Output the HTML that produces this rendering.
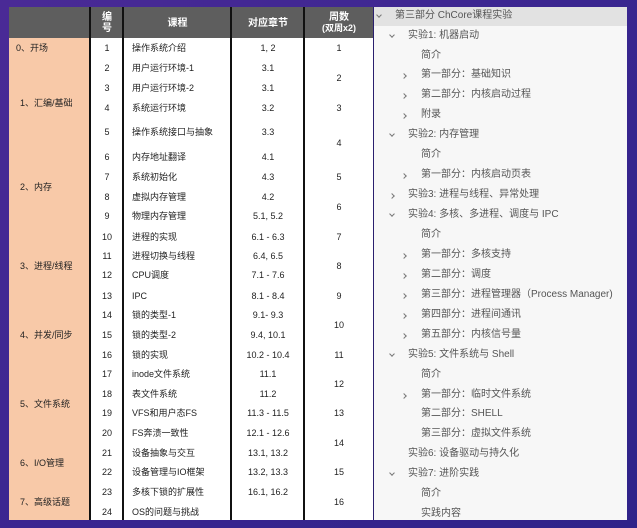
<!DOCTYPE html>
<html><head><meta charset="utf-8">
<style>
*{margin:0;padding:0;box-sizing:border-box}
body{width:637px;height:528px;overflow:hidden;background:linear-gradient(135deg,#4a2a96 0%,#3a2690 50%,#2f2389 100%);position:relative;font-family:"Liberation Sans","Noto Sans CJK SC",sans-serif}
.a{position:absolute}
#tbl{left:9px;top:7px;width:364px;height:513px;background:#fff}
#hdr{left:9px;top:7px;width:364px;height:31px;background:#5e5e5e}
#grp{left:9px;top:38px;width:81px;height:482px;background:#f8c9a8}
.vl{position:absolute;top:7px;height:513px;width:2px;background:#111}
.h{position:absolute;color:#fff;font-weight:bold;font-size:10px;text-align:center;line-height:11px}
.t{position:absolute;font-size:9px;color:#222;line-height:12px;white-space:nowrap}
.c{text-align:center}
#panel{left:373px;top:7px;width:254px;height:513px;background:#f7f7f7;border-left:1px solid #2a1f6e}
#sel{left:374px;top:7px;width:253px;height:19px;background:#e2e2e2}
.r{position:absolute;font-size:10px;color:#555;line-height:14px;white-space:nowrap}
.d,.g{position:absolute;width:4px;height:4px;border-right:1px solid #777;border-bottom:1px solid #777}
.d{transform:rotate(45deg)}
.g{transform:rotate(-45deg)}
</style></head><body>
<div class="a" id="tbl"></div>
<div class="a" id="hdr"></div>
<div class="a" id="grp"></div>
<div class="vl" style="left:89px"></div>
<div class="vl" style="left:122px"></div>
<div class="vl" style="left:230px"></div>
<div class="vl" style="left:303px"></div>

<div class="h" style="left:91px;width:32px;top:12px">编<br>号</div>
<div class="h" style="left:124px;width:107px;top:18px">课程</div>
<div class="h" style="left:232px;width:72px;top:18px">对应章节</div>
<div class="h" style="left:305px;width:68px;top:12px">周数<br><span style="font-size:9px">(双周x2)</span></div>

<div class="t" style="left:16px;top:42px">0、开场</div>
<div class="t" style="left:20px;top:97px">1、汇编/基础</div>
<div class="t" style="left:20px;top:181px">2、内存</div>
<div class="t" style="left:20px;top:260px">3、进程/线程</div>
<div class="t" style="left:20px;top:329px">4、并发/同步</div>
<div class="t" style="left:20px;top:398px">5、文件系统</div>
<div class="t" style="left:20px;top:457px">6、I/O管理</div>
<div class="t" style="left:20px;top:496px">7、高级话题</div>

<div class="t c" style="left:91px;width:32px;top:42px">1</div><div class="t" style="left:132px;top:42px">操作系统介绍</div><div class="t c" style="left:232px;width:72px;top:42px">1, 2</div>
<div class="t c" style="left:91px;width:32px;top:62px">2</div><div class="t" style="left:132px;top:62px">用户运行环境-1</div><div class="t c" style="left:232px;width:72px;top:62px">3.1</div>
<div class="t c" style="left:91px;width:32px;top:82px">3</div><div class="t" style="left:132px;top:82px">用户运行环境-2</div><div class="t c" style="left:232px;width:72px;top:82px">3.1</div>
<div class="t c" style="left:91px;width:32px;top:102px">4</div><div class="t" style="left:132px;top:102px">系统运行环境</div><div class="t c" style="left:232px;width:72px;top:102px">3.2</div>
<div class="t c" style="left:91px;width:32px;top:126px">5</div><div class="t" style="left:132px;top:126px">操作系统接口与抽象</div><div class="t c" style="left:232px;width:72px;top:126px">3.3</div>
<div class="t c" style="left:91px;width:32px;top:151px">6</div><div class="t" style="left:132px;top:151px">内存地址翻译</div><div class="t c" style="left:232px;width:72px;top:151px">4.1</div>
<div class="t c" style="left:91px;width:32px;top:171px">7</div><div class="t" style="left:132px;top:171px">系统初始化</div><div class="t c" style="left:232px;width:72px;top:171px">4.3</div>
<div class="t c" style="left:91px;width:32px;top:191px">8</div><div class="t" style="left:132px;top:191px">虚拟内存管理</div><div class="t c" style="left:232px;width:72px;top:191px">4.2</div>
<div class="t c" style="left:91px;width:32px;top:210px">9</div><div class="t" style="left:132px;top:210px">物理内存管理</div><div class="t c" style="left:232px;width:72px;top:210px">5.1, 5.2</div>
<div class="t c" style="left:91px;width:32px;top:231px">10</div><div class="t" style="left:132px;top:231px">进程的实现</div><div class="t c" style="left:232px;width:72px;top:231px">6.1 - 6.3</div>
<div class="t c" style="left:91px;width:32px;top:250px">11</div><div class="t" style="left:132px;top:250px">进程切换与线程</div><div class="t c" style="left:232px;width:72px;top:250px">6.4, 6.5</div>
<div class="t c" style="left:91px;width:32px;top:269px">12</div><div class="t" style="left:132px;top:269px">CPU调度</div><div class="t c" style="left:232px;width:72px;top:269px">7.1 - 7.6</div>
<div class="t c" style="left:91px;width:32px;top:290px">13</div><div class="t" style="left:132px;top:290px">IPC</div><div class="t c" style="left:232px;width:72px;top:290px">8.1 - 8.4</div>
<div class="t c" style="left:91px;width:32px;top:309px">14</div><div class="t" style="left:132px;top:309px">锁的类型-1</div><div class="t c" style="left:232px;width:72px;top:309px">9.1- 9.3</div>
<div class="t c" style="left:91px;width:32px;top:329px">15</div><div class="t" style="left:132px;top:329px">锁的类型-2</div><div class="t c" style="left:232px;width:72px;top:329px">9.4, 10.1</div>
<div class="t c" style="left:91px;width:32px;top:349px">16</div><div class="t" style="left:132px;top:349px">锁的实现</div><div class="t c" style="left:232px;width:72px;top:349px">10.2 - 10.4</div>
<div class="t c" style="left:91px;width:32px;top:368px">17</div><div class="t" style="left:132px;top:368px">inode文件系统</div><div class="t c" style="left:232px;width:72px;top:368px">11.1</div>
<div class="t c" style="left:91px;width:32px;top:388px">18</div><div class="t" style="left:132px;top:388px">表文件系统</div><div class="t c" style="left:232px;width:72px;top:388px">11.2</div>
<div class="t c" style="left:91px;width:32px;top:407px">19</div><div class="t" style="left:132px;top:407px">VFS和用户态FS</div><div class="t c" style="left:232px;width:72px;top:407px">11.3 - 11.5</div>
<div class="t c" style="left:91px;width:32px;top:427px">20</div><div class="t" style="left:132px;top:427px">FS奔溃一致性</div><div class="t c" style="left:232px;width:72px;top:427px">12.1 - 12.6</div>
<div class="t c" style="left:91px;width:32px;top:447px">21</div><div class="t" style="left:132px;top:447px">设备抽象与交互</div><div class="t c" style="left:232px;width:72px;top:447px">13.1, 13.2</div>
<div class="t c" style="left:91px;width:32px;top:466px">22</div><div class="t" style="left:132px;top:466px">设备管理与IO框架</div><div class="t c" style="left:232px;width:72px;top:466px">13.2, 13.3</div>
<div class="t c" style="left:91px;width:32px;top:486px">23</div><div class="t" style="left:132px;top:486px">多核下锁的扩展性</div><div class="t c" style="left:232px;width:72px;top:486px">16.1, 16.2</div>
<div class="t c" style="left:91px;width:32px;top:506px">24</div><div class="t" style="left:132px;top:506px">OS的问题与挑战</div>

<div class="t c" style="left:305px;width:68px;top:42px">1</div>
<div class="t c" style="left:305px;width:68px;top:72px">2</div>
<div class="t c" style="left:305px;width:68px;top:102px">3</div>
<div class="t c" style="left:305px;width:68px;top:137px">4</div>
<div class="t c" style="left:305px;width:68px;top:171px">5</div>
<div class="t c" style="left:305px;width:68px;top:201px">6</div>
<div class="t c" style="left:305px;width:68px;top:231px">7</div>
<div class="t c" style="left:305px;width:68px;top:260px">8</div>
<div class="t c" style="left:305px;width:68px;top:290px">9</div>
<div class="t c" style="left:305px;width:68px;top:319px">10</div>
<div class="t c" style="left:305px;width:68px;top:349px">11</div>
<div class="t c" style="left:305px;width:68px;top:378px">12</div>
<div class="t c" style="left:305px;width:68px;top:407px">13</div>
<div class="t c" style="left:305px;width:68px;top:437px">14</div>
<div class="t c" style="left:305px;width:68px;top:466px">15</div>
<div class="t c" style="left:305px;width:68px;top:496px">16</div>

<div class="a" id="panel"></div>
<div class="a" id="sel"></div>
<div class="d" style="left:377px;top:13px"></div><div class="r" style="left:395px;top:9px">第三部分 ChCore课程实验</div>
<div class="d" style="left:390px;top:33px"></div><div class="r" style="left:408px;top:29px">实验1: 机器启动</div>
<div class="r" style="left:421px;top:49px">简介</div>
<div class="g" style="left:402px;top:74px"></div><div class="r" style="left:421px;top:68px">第一部分：基础知识</div>
<div class="g" style="left:402px;top:94px"></div><div class="r" style="left:421px;top:88px">第二部分：内核启动过程</div>
<div class="g" style="left:402px;top:114px"></div><div class="r" style="left:421px;top:108px">附录</div>
<div class="d" style="left:390px;top:132px"></div><div class="r" style="left:408px;top:128px">实验2: 内存管理</div>
<div class="r" style="left:421px;top:148px">简介</div>
<div class="g" style="left:402px;top:174px"></div><div class="r" style="left:421px;top:168px">第一部分：内核启动页表</div>
<div class="g" style="left:390px;top:194px"></div><div class="r" style="left:408px;top:188px">实验3: 进程与线程、异常处理</div>
<div class="d" style="left:390px;top:212px"></div><div class="r" style="left:408px;top:208px">实验4: 多核、多进程、调度与 IPC</div>
<div class="r" style="left:421px;top:228px">简介</div>
<div class="g" style="left:402px;top:254px"></div><div class="r" style="left:421px;top:248px">第一部分：多核支持</div>
<div class="g" style="left:402px;top:274px"></div><div class="r" style="left:421px;top:268px">第二部分：调度</div>
<div class="g" style="left:402px;top:294px"></div><div class="r" style="left:421px;top:288px">第三部分：进程管理器（Process Manager)</div>
<div class="g" style="left:402px;top:314px"></div><div class="r" style="left:421px;top:308px">第四部分：进程间通讯</div>
<div class="g" style="left:402px;top:334px"></div><div class="r" style="left:421px;top:328px">第五部分：内核信号量</div>
<div class="d" style="left:390px;top:352px"></div><div class="r" style="left:408px;top:348px">实验5: 文件系统与 Shell</div>
<div class="r" style="left:421px;top:368px">简介</div>
<div class="g" style="left:402px;top:394px"></div><div class="r" style="left:421px;top:388px">第一部分：临时文件系统</div>
<div class="r" style="left:421px;top:407px">第二部分：SHELL</div>
<div class="r" style="left:421px;top:427px">第三部分：虚拟文件系统</div>
<div class="r" style="left:408px;top:447px">实验6: 设备驱动与持久化</div>
<div class="d" style="left:390px;top:471px"></div><div class="r" style="left:408px;top:467px">实验7: 进阶实践</div>
<div class="r" style="left:421px;top:487px">简介</div>
<div class="r" style="left:421px;top:507px">实践内容</div>
</body></html>
